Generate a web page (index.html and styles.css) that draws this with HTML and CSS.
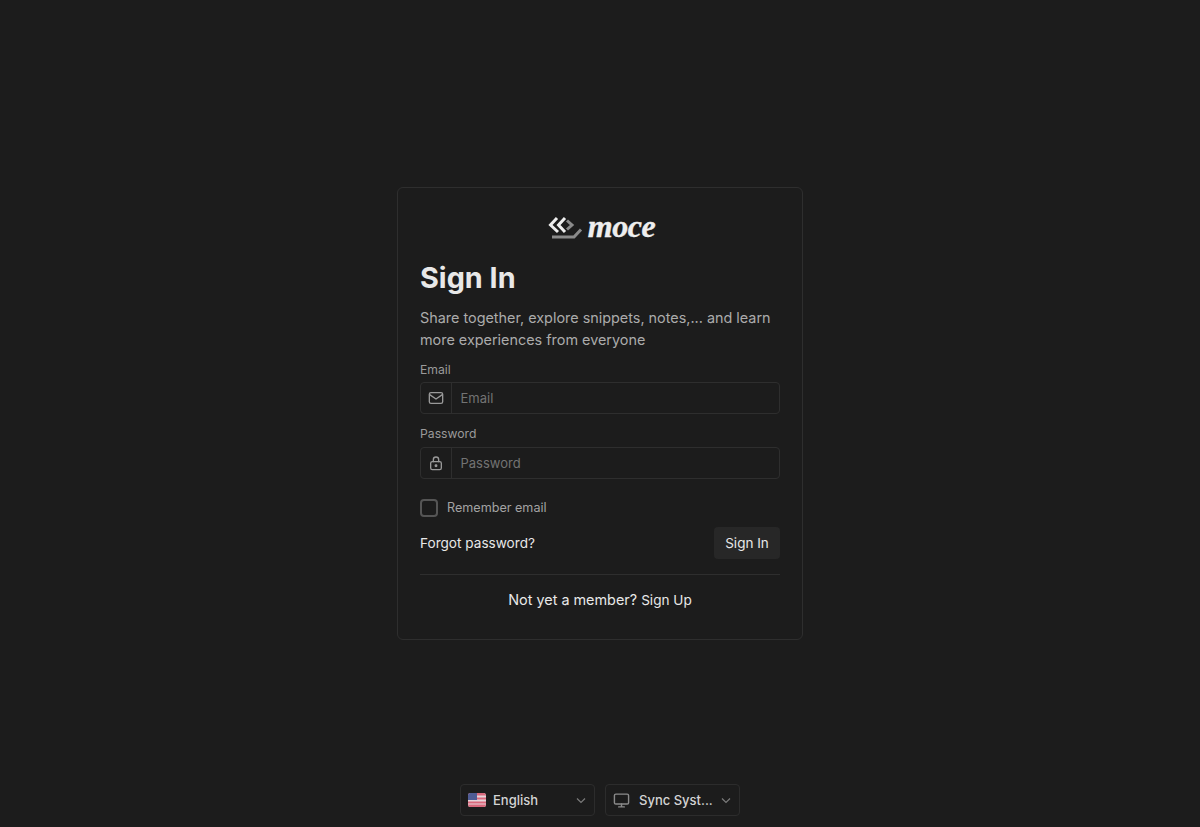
FILE: index.html
```html
<!DOCTYPE html>
<html lang="en">
<head>
    <meta charset="UTF-8">
    <meta name="viewport" content="width=device-width, initial-scale=1.0">
    <title>Sign In - moce</title>
    <link rel="stylesheet" href="styles.css">
</head>
<body>

<div class="page">
    <main class="card">
        <div class="logo">
            <svg class="logo-mark" width="36" height="26" viewBox="0 0 36 26" fill="none">
                <path d="M10 3 L3.5 10 L11 17" stroke="#eeeeee" stroke-width="3"/>
                <path d="M18 3 L11.5 10 L18 17" stroke="#eeeeee" stroke-width="3"/>
                <path d="M20 5.5 L25 10 L20 14.5" stroke="#8a8a8a" stroke-width="3"/>
                <path d="M5 22 H27 L34 14.5" stroke="#8a8a8a" stroke-width="3"/>
            </svg>
            <span class="logo-text">moce</span>
        </div>

        <h1>Sign In</h1>
        <p class="intro">Share together, explore snippets, notes,... and learn more experiences from everyone</p>

        <label class="field-label" for="email">Email</label>
        <div class="input-group">
            <span class="addon">
                <svg width="16" height="16" viewBox="0 0 24 24" fill="none" stroke="currentColor" stroke-width="2" stroke-linecap="round" stroke-linejoin="round">
                    <rect x="2" y="4" width="20" height="16" rx="2.5"/>
                    <path d="M2.5 7 L12 13.5 L21.5 7"/>
                </svg>
            </span>
            <input id="email" type="text" placeholder="Email">
        </div>

        <label class="field-label second" for="password">Password</label>
        <div class="input-group">
            <span class="addon">
                <svg width="16" height="16" viewBox="0 0 24 24" fill="none" stroke="currentColor" stroke-width="2" stroke-linecap="round" stroke-linejoin="round">
                    <rect x="4" y="10" width="16" height="12" rx="2.5"/>
                    <path d="M8 10 V7 a4 4 0 0 1 8 0 V10"/>
                    <circle cx="12" cy="16" r="1.2" fill="currentColor"/>
                </svg>
            </span>
            <input id="password" type="password" placeholder="Password">
        </div>

        <label class="remember">
            <span class="checkbox"></span>
            Remember email
        </label>

        <div class="actions">
            <a class="forgot" href="#">Forgot password?</a>
            <button class="button" type="button">Sign In</button>
        </div>

        <div class="signup">Not yet a member? <a href="#">Sign Up</a></div>
    </main>

    <footer class="footer">
        <div class="select">
            <svg class="flag" width="18" height="14" viewBox="0 0 18 14">
                <rect width="18" height="14" rx="2.5" fill="#e6d5da"/>
                <path d="M0 2.5 a2.5 2.5 0 0 1 2.5-2.5 H15.5 a2.5 2.5 0 0 1 2.5 2.5 H0 Z" fill="#d9687c"/>
                <rect y="4.5" width="18" height="2" fill="#d9687c"/>
                <rect y="8.5" width="18" height="2" fill="#d9687c"/>
                <path d="M0 11.5 H18 a2.5 2.5 0 0 1-2.5 2.5 H2.5 a2.5 2.5 0 0 1-2.5-2.5 Z" fill="#d9687c"/>
                <path d="M0 2.5 a2.5 2.5 0 0 1 2.5-2.5 H9 V7 H0 Z" fill="#4f5c94"/>
            </svg>
            <span class="select-text">English</span>
            <svg class="chevron" width="12" height="12" viewBox="0 0 12 12" fill="none" stroke="currentColor" stroke-width="1.2"><path d="M2 4.5 L6 8.5 L10 4.5"/></svg>
        </div>
        <div class="select">
            <svg class="monitor" width="17" height="17" viewBox="0 0 24 24" fill="none" stroke="currentColor" stroke-width="2" stroke-linecap="round" stroke-linejoin="round">
                <rect x="2" y="3" width="20" height="14" rx="2"/>
                <path d="M8 21 H16 M12 17 V21"/>
            </svg>
            <span class="select-text">Sync Syst...</span>
            <svg class="chevron" width="12" height="12" viewBox="0 0 12 12" fill="none" stroke="currentColor" stroke-width="1.2"><path d="M2 4.5 L6 8.5 L10 4.5"/></svg>
        </div>
    </footer>
</div>

</body>
</html>
```

FILE: styles.css
```css
* {
    box-sizing: border-box;
}
body {
    margin: 0;
    background-color: #1c1c1c;
    font-family: Inter, "Noto Sans", sans-serif;
    color: #e8e8e8;
}
.page {
    display: grid;
    grid-template-rows: 1fr auto 1fr;
    justify-items: center;
    height: 827px;
}
.card {
    grid-row: 2;
    width: 406px;
    height: 453px;
    padding: 22px;
    border: 1px solid #2e2e2e;
    border-radius: 6px;
}
.logo {
    display: flex;
    justify-content: center;
    align-items: center;
    gap: 5px;
    height: 36px;
    padding-left: 2px;
}
.logo-text {
    padding-bottom: 4px;
    font-family: "Liberation Serif", serif;
    font-style: italic;
    font-weight: bold;
    font-size: 32px;
    line-height: 36px;
    letter-spacing: -0.5px;
    color: #eeeeee;
    -webkit-text-stroke: 0.4px #eeeeee;
}
h1 {
    margin: 11px 0 0;
    font-size: 28.8px;
    line-height: 42px;
    font-weight: 700;
    color: #e8e8e8;
}
.intro {
    margin: 8px 0 0;
    font-size: 14.4px;
    line-height: 22px;
    color: #ababab;
}
.field-label {
    display: block;
    margin-top: 10px;
    font-size: 12.2px;
    line-height: 18px;
    color: #9a9a9a;
}
.field-label.second {
    margin-top: 11px;
}
.input-group {
    display: flex;
    height: 32px;
    margin-top: 3px;
    border: 1px solid #2e2e2e;
    border-radius: 4px;
}
.field-label.second + .input-group {
    margin-top: 4px;
}
.addon {
    display: flex;
    align-items: center;
    justify-content: center;
    width: 31px;
    border-right: 1px solid #2e2e2e;
    color: #999999;
}
.input-group input {
    flex: 1;
    min-width: 0;
    padding: 0 8.5px;
    background: transparent;
    border: none;
    outline: none;
    font-family: inherit;
    font-size: 13px;
    color: #e8e8e8;
}
.input-group input::placeholder {
    color: #737373;
    opacity: 1;
}
.remember {
    display: flex;
    align-items: center;
    gap: 9px;
    margin-top: 20px;
    font-size: 12.6px;
    line-height: 18px;
    color: #a3a3a3;
}
.checkbox {
    width: 18px;
    height: 18px;
    border: 2px solid #555555;
    border-radius: 4px;
}
.actions {
    display: flex;
    justify-content: space-between;
    align-items: center;
    margin-top: 10px;
    padding-bottom: 15px;
    border-bottom: 1px solid #2e2e2e;
}
.forgot {
    font-size: 13.6px;
    color: #e8e8e8;
    text-decoration: none;
}
.button {
    width: 66px;
    height: 32px;
    padding: 0;
    background-color: #272727;
    border: none;
    border-radius: 4px;
    font-family: inherit;
    font-size: 13.5px;
    color: #e8e8e8;
}
.signup {
    margin-top: 15px;
    text-align: center;
    font-size: 14.4px;
    line-height: 20px;
    color: #e8e8e8;
}
.signup a {
    font-size: 13.6px;
    color: #e8e8e8;
    text-decoration: none;
}
.footer {
    grid-row: 3;
    align-self: end;
    display: flex;
    gap: 10px;
    padding-bottom: 11px;
}
.select {
    display: flex;
    align-items: center;
    width: 135px;
    height: 32px;
    padding: 0 7px;
    border: 1px solid #2c2c2c;
    border-radius: 4px;
    font-size: 13px;
    font-weight: 500;
    color: #d4d4d4;
}
.flag {
    margin-right: 7px;
}
.monitor {
    margin-right: 9px;
    color: #8a8a8a;
}
.select-text {
    flex: 1;
}
.chevron {
    color: #7a7a7a;
}
```
